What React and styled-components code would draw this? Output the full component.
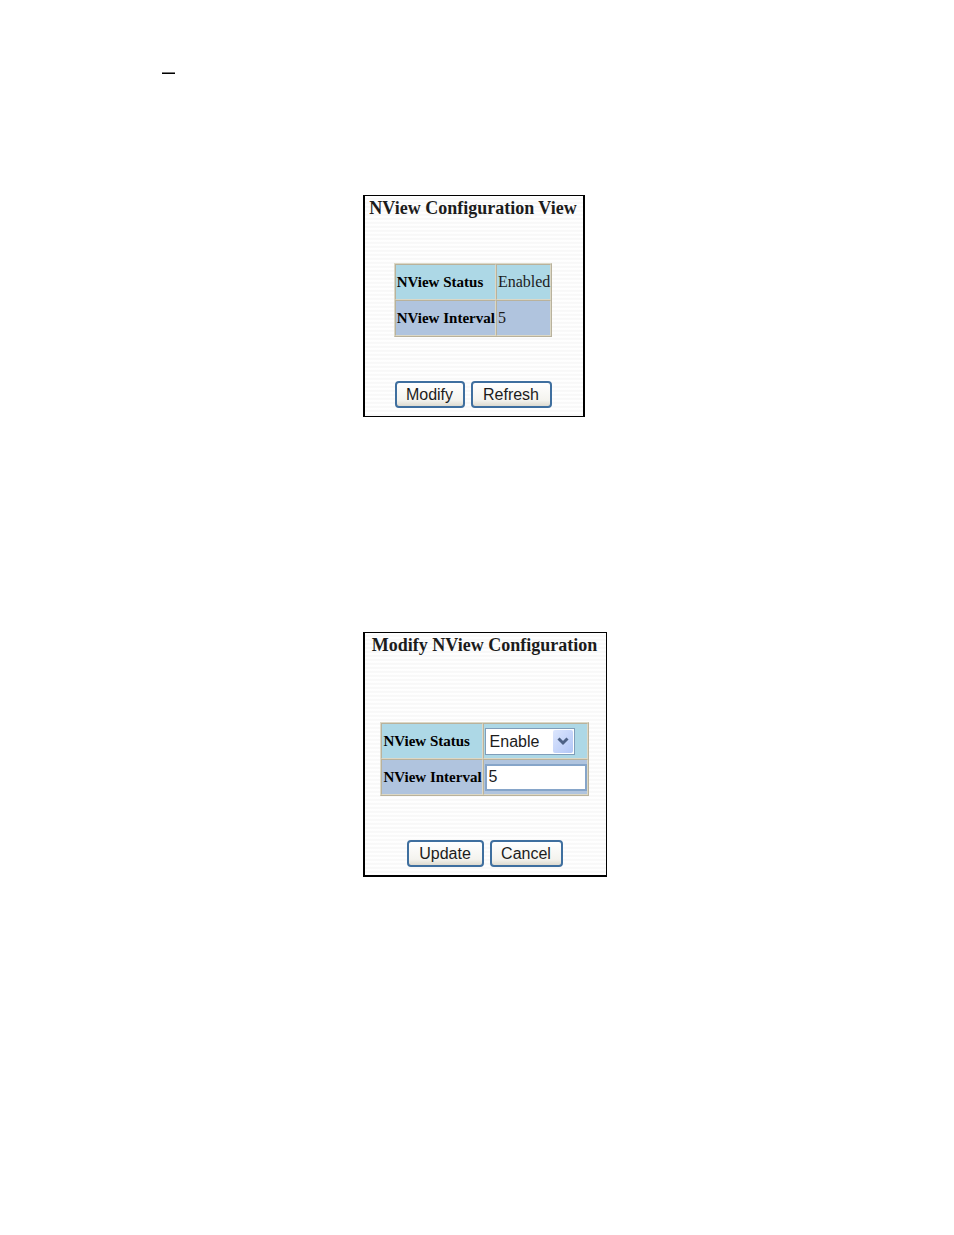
import React, { useState } from "react";
import styled, { createGlobalStyle } from "styled-components";

const GlobalStyle = createGlobalStyle`
    body {
        margin: 0;
        background: #ffffff;
        color: #000000;
        font-family: "Liberation Serif", "Times New Roman", serif;
    }
`;

const Page = styled.main`
    padding: 72px 24px 72px 162px;
`;

const Rule = styled.hr`
    width: 13px;
    height: 2px;
    margin: 0 0 121px;
    border: none;
    background: linear-gradient(#777777 50%, #000000 50%);
`;

const Panels = styled.div`
    display: flex;
    flex-direction: column;
    align-items: flex-start;
    gap: 215px;
    padding-left: 201px;
`;

const Panel = styled.form`
    box-sizing: border-box;
    display: flex;
    flex-direction: column;
    align-items: center;
    min-width: ${(props) => props.$width};
    padding: 0 6px 8px 4px;
    border: solid #000000;
    border-width: ${(props) => props.$border};
    background: repeating-linear-gradient(
        #ffffff 0,
        #fdfdfd 2px,
        #f3f3f3 3px,
        #ffffff 4px
    );
`;

const Title = styled.h1`
    margin: 0 0 ${(props) => props.$gap};
    font-size: 18px;
    line-height: 24px;
    font-weight: bold;
    color: #1c1c1c;
    white-space: nowrap;
`;

const Table = styled.table`
    border: 1px solid;
    border-color: #dcd8c6 #b9b29c #b9b29c #dcd8c6;
    border-spacing: 0;
    font-size: 16px;
    line-height: 20px;
`;

const Row = styled.tr`
    height: 36px;
    background: ${(props) => props.$color};
`;

const cell = `
    box-sizing: border-box;
    padding: 0 0 0 1px;
    border: 1px solid;
    border-color: #b9b29c #dcd8c6 #dcd8c6 #b9b29c;
    text-align: left;
    white-space: nowrap;
`;

const Label = styled.th`
    ${cell}
    font-size: 15px;
    font-weight: bold;
`;

const Value = styled.td`
    ${cell}
    color: #1c1c1c;
`;

const Select = styled.div`
    position: relative;
    width: 90px;
    height: 27px;

    select {
        box-sizing: border-box;
        width: 100%;
        height: 100%;
        padding: 0 24px 0 4px;
        appearance: none;
        border: 1px solid #7f9db9;
        border-radius: 0;
        background: #ffffff;
        color: #1c1c1c;
        font: 16px "Liberation Sans", Arial, sans-serif;
    }

    svg {
        position: absolute;
        top: 2px;
        right: 2px;
        pointer-events: none;
    }
`;

const Input = styled.input`
    box-sizing: border-box;
    display: block;
    width: 102px;
    height: 27px;
    padding: 0 2px;
    border: 2px solid #86a5c9;
    background: #ffffff;
    color: #1c1c1c;
    font: 16px "Liberation Sans", Arial, sans-serif;
`;

const Buttons = styled.div`
    display: flex;
    gap: 6px;
    margin-top: 44px;
`;

const Button = styled.button`
    box-sizing: border-box;
    width: ${(props) => props.$width};
    height: 27px;
    padding: 0;
    border: 2px solid #3f6f9f;
    border-radius: 4px;
    background: linear-gradient(#ffffff, #f4f3ee 75%, #dedbd0);
    color: #1c1c1c;
    font: 16px "Liberation Sans", Arial, sans-serif;
`;

const ArrowIcon = () => (
    <svg width="20" height="23" viewBox="0 0 20 23" aria-hidden="true">
        <defs>
            <linearGradient id="arrow-face" x1="0" y1="0" x2="1" y2="1">
                <stop offset="0" stopColor="#dce6fd" />
                <stop offset="1" stopColor="#b2c6f6" />
            </linearGradient>
        </defs>
        <rect width="20" height="23" rx="2" fill="url(#arrow-face)" />
        <path
            d="M5.5 8.5L10 13L14.5 8.5"
            fill="none"
            stroke="#4d6185"
            strokeWidth="3"
        />
    </svg>
);

const ConfigurationView = () => (
    <Panel $width="222px" $border="1px 2px 1px 2px">
        <Title $gap="43px">NView Configuration View</Title>
        <Table>
            <tbody>
                <Row $color="#add8e6">
                    <Label scope="row">NView Status</Label>
                    <Value>Enabled</Value>
                </Row>
                <Row $color="#b0c4de">
                    <Label scope="row">NView Interval</Label>
                    <Value>5</Value>
                </Row>
            </tbody>
        </Table>
        <Buttons>
            <Button type="button" $width="70px">
                Modify
            </Button>
            <Button type="button" $width="81px">
                Refresh
            </Button>
        </Buttons>
    </Panel>
);

const ModifyConfiguration = () => {
    const [status, setStatus] = useState("Enable");
    const [interval, setInterval] = useState("5");

    return (
        <Panel $width="244px" $border="1px 1px 2px 2px">
            <Title $gap="65px">Modify NView Configuration</Title>
            <Table>
                <tbody>
                    <Row $color="#add8e6">
                        <Label scope="row">
                            <label htmlFor="status">NView Status</label>
                        </Label>
                        <Value>
                            <Select>
                                <select
                                    id="status"
                                    value={status}
                                    onChange={(e) => setStatus(e.target.value)}
                                >
                                    <option>Enable</option>
                                    <option>Disable</option>
                                </select>
                                <ArrowIcon />
                            </Select>
                        </Value>
                    </Row>
                    <Row $color="#b0c4de">
                        <Label scope="row">
                            <label htmlFor="interval">NView Interval</label>
                        </Label>
                        <Value>
                            <Input
                                id="interval"
                                type="text"
                                value={interval}
                                onChange={(e) => setInterval(e.target.value)}
                            />
                        </Value>
                    </Row>
                </tbody>
            </Table>
            <Buttons>
                <Button type="button" $width="77px">
                    Update
                </Button>
                <Button type="button" $width="73px">
                    Cancel
                </Button>
            </Buttons>
        </Panel>
    );
};

export default function App() {
    return (
        <>
            <GlobalStyle />
            <Page>
                <Rule />
                <Panels>
                    <ConfigurationView />
                    <ModifyConfiguration />
                </Panels>
            </Page>
        </>
    );
}
